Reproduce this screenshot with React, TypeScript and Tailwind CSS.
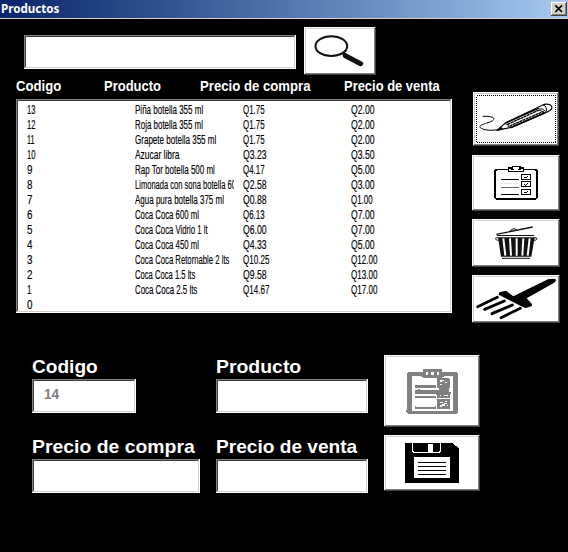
import { useLayoutEffect, useRef, useState, type ReactNode } from "react";

const raised =
  "block shrink-0 bg-white shadow-[inset_-1px_-1px_0_#404040,inset_1px_1px_0_#ffffff,inset_-2px_-2px_0_#808080,inset_2px_2px_0_#d4d0c8]";
const sunken =
  "block shrink-0 bg-white shadow-[inset_-1px_-1px_0_#ffffff,inset_1px_1px_0_#808080,inset_-2px_-2px_0_#d4d0c8,inset_2px_2px_0_#404040]";

/* Squeezes or stretches a line of text to the given width. */
function FitText({ width, className = "", children }: { width: number; className?: string; children: ReactNode }) {
  const ref = useRef<HTMLSpanElement>(null);
  const [scale, setScale] = useState(1);
  useLayoutEffect(() => {
    if (ref.current) setScale(width / ref.current.offsetWidth);
  }, [width]);
  return (
    <span
      ref={ref}
      className={`inline-block origin-left whitespace-nowrap ${className}`}
      style={{ transform: `scaleX(${scale})` }}
    >
      {children}
    </span>
  );
}

type Cell = [string, number];
const rows: Cell[][] = [
  [["13", 8.5], ["Piña botella 355 ml", 68], ["Q1.75", 21.5], ["Q2.00", 23.5]],
  [["12", 8.5], ["Roja botella 355 ml", 68], ["Q1.75", 21.5], ["Q2.00", 23.5]],
  [["11", 7.5], ["Grapete botella 355 ml", 81], ["Q1.75", 21.5], ["Q2.00", 23.5]],
  [["10", 8.5], ["Azucar libra", 44.5], ["Q3.23", 23.5], ["Q3.50", 23.5]],
  [["9", 5.5], ["Rap Tor botella 500 ml", 80], ["Q4.17", 21.5], ["Q5.00", 23.5]],
  [["8", 5.5], ["Limonada con sona botella 60", 101], ["Q2.58", 23.5], ["Q3.00", 23.5]],
  [["7", 5.5], ["Agua pura botella 375 ml", 89], ["Q0.88", 23.5], ["Q1.00", 21.5]],
  [["6", 5.5], ["Coca Coca 600 ml", 64], ["Q6.13", 21.5], ["Q7.00", 23.5]],
  [["5", 5.5], ["Coca Coca Vidrio 1 lt", 72.5], ["Q6.00", 23.5], ["Q7.00", 23.5]],
  [["4", 5.5], ["Coca Coca 450 ml", 64], ["Q4.33", 23.5], ["Q5.00", 23.5]],
  [["3", 5.5], ["Coca Coca Retornable 2 lts", 94.5], ["Q10.25", 26.5], ["Q12.00", 26.5]],
  [["2", 5.5], ["Coca Coca 1.5 lts", 60.5], ["Q9.58", 23.5], ["Q13.00", 26.5]],
  [["1", 4.5], ["Coca Coca 2.5 lts", 62.5], ["Q14.67", 26.5], ["Q17.00", 26.5]],
  [["0", 5.5]],
];

function SearchIcon() {
  return (
    <svg className="size-full" viewBox="60 81 216 144" fill="none" stroke="#111">
      <ellipse cx="142" cy="138.500" rx="47.500" ry="29.500" strokeWidth="6" />
      <path d="M174 158L190 168" strokeWidth="8" />
      <path d="M184 167L230 191" strokeWidth="15" strokeLinecap="round" />
    </svg>
  );
}

function PencilIcon() {
  return (
    <svg className="size-full" viewBox="26 24 258 162" fill="none" stroke="#000" strokeWidth="3">
      <rect x="37.500" y="34.500" width="237" height="141" strokeDasharray="3 3" shapeRendering="crispEdges" />
      <path d="M55 97C78 96 92 100 88 107C82 117 38 121 48 131C56 139 84 141 104 136" strokeWidth="3" />
      <path d="M100 138L124 116L240 61Q262 58 263 72Q260 80 242 87L141 130Z" strokeWidth="3.500" />
      <path d="M130 121L222 79M136 126L238 82" strokeWidth="4" strokeDasharray="9 1.500" />
      <path d="M127 116L222 73" strokeWidth="4" />
      <path d="M138 131L242 86" strokeWidth="5" />
      <path d="M100 139L108 129L115 135Z" fill="#000" />
      <path d="M120 119L131 121L132 128L141 130M212 75L218 79L228 79L240 87M218 72L226 75L235 75L244 83M237 64Q248 65 246 83" strokeWidth="3" />
    </svg>
  );
}

function ClipboardIcon() {
  return (
    <svg className="size-full" viewBox="24 213 264 168" fill="none" stroke="#000" shapeRendering="crispEdges">
      <rect x="93" y="257" width="126" height="88" rx="6" strokeWidth="4.500" />
      <path d="M134 252H145V248H168V252H179V262H134Z" fill="#fff" strokeWidth="4" />
      <path d="M141 257H150M161 257H170" strokeWidth="3" />
      <path d="M111 286.500H165M111 331.500H165" strokeWidth="3" />
      <path d="M111 310.500H165" stroke="#666" strokeWidth="3" />
      <path d="M111 298.500H165" stroke="#ddd" strokeWidth="3" strokeDasharray="6 3" />
      <g strokeWidth="3">
        <rect x="172.500" y="271.500" width="27" height="15" />
        <rect x="172.500" y="292.500" width="27" height="16" />
        <rect x="172.500" y="316.500" width="27" height="15" />
        <path d="M180 279L185 282L193 276M179 301L184 304L193 296M180 324L185 327L192 321" />
      </g>
    </svg>
  );
}

function TrashIcon() {
  return (
    <svg className="size-full" viewBox="24 27 264 144" fill="none" stroke="#111">
      <path d="M97 73L206 51" strokeWidth="4" />
      <path d="M139 63L143 58L153 56L156 60" strokeWidth="3" />
      <path d="M99 76.500H211" strokeWidth="3" />
      <path d="M102 82H212L202 140H111Z" fill="#111" stroke="none" />
      <path d="M104 84C92 80 91 91 104 91M210 84C222 80 222 91 210 91" strokeWidth="3" />
      <path d="M118 85L124 137M138 85L141 137M158 85V137M178 85L175 137M197 85L191 137" stroke="#fff" strokeWidth="6" />
      <path d="M114 145H198" strokeWidth="3" />
    </svg>
  );
}

function BrushIcon() {
  return (
    <svg className="size-full" viewBox="24 195 264 144" fill="#000" stroke="#000">
      <path d="M148 259L252 208Q268 204 275 208Q278 213 268 220L188 265L203 281L204 288L186 294L178 292L104 254L106 247L126 242Z" stroke="none" />
      <path d="M41 290L100 262M62 298L121 273M84 311L145 285M111 323L169 295" strokeWidth="8.500" strokeLinecap="round" />
    </svg>
  );
}

function DisabledClipboardIcon() {
  return (
    <svg className="size-full" viewBox="24 30 288 216" fill="#808080" shapeRendering="crispEdges">
      <path fillRule="evenodd" d="M98 81H240L246 87V202L240 208H98L91 200V196H93V86ZM108 92V198H232V92Z" />
      <path d="M135 80H140V73H199V80H205V93L198 98H141L135 94Z" />
      <path d="M150 81H156V89H150ZM165 81H173V89H165ZM182 81H188V89H182Z" fill="#fff" />
      <path d="M117 120H181V129H117ZM117 136H126V132H133V136H184V147H117ZM117 152H181V158H120V160H117ZM117 184H120V187H178V184H181V191H117Z" />
      <path d="M183 100H191V98H220V102H222V130H220V140H225V147H222V160H183V149H180V134H189V128H183ZM183 162H222V192H183Z" />
      <path d="M191 106H198V104H205V107H198V110H191ZM208 110H214V113H208ZM191 117H197V120H191ZM191 151H195V154H191ZM205 151H216V154H205ZM192 170H200V173H192ZM206 168H212V171H206ZM192 181H198V178H204V175H213V178H207V182H198V185H192ZM214 180H217V184H214Z" fill="#fff" />
    </svg>
  );
}

function FloppyIcon() {
  return (
    <svg className="size-full" viewBox="24 270 288 168" fill="#000" shapeRendering="crispEdges">
      <path d="M87 294H228L249 310V414H87Z" />
      <path d="M109.500 294V318L113 322.500H190L193.500 318V294" fill="none" stroke="#fff" strokeWidth="3" />
      <rect x="156" y="297" width="15" height="24" fill="#fff" />
      <rect x="114" y="336" width="108" height="63" fill="#fff" />
      <path d="M126 351.500H210M126 364.500H210M126 377.500H210M126 388.500H210" stroke="#000" strokeWidth="3" />
    </svg>
  );
}

function Field({ label, labelWidth, size, value }: { label: string; labelWidth: number; size: string; value?: string }) {
  return (
    <label className={`block ${size}`}>
      <span className="block h-6 text-[18.5px] leading-6 font-bold text-white">
        <FitText width={labelWidth}>{label}</FitText>
      </span>
      <span className={`${sunken} h-[34px] pl-3 text-[15.5px] leading-[30px] font-bold text-[#808080]`}>
        {value && <FitText width={15}>{value}</FitText>}
      </span>
    </label>
  );
}

export default function App() {
  return (
    <div className="h-[552px] w-[568px] overflow-hidden bg-black font-['Liberation_Sans',Arial,sans-serif]">
      <header className="flex h-[19px] items-start justify-between border-b border-[#d4d0c8] bg-linear-to-r from-[#0a246a] to-[#a6caf0] pl-px">
        <h1 className="font-['Noto_Sans',sans-serif] text-[12px] leading-[18px] font-bold text-white">
          <FitText width={58}>Productos</FitText>
        </h1>
        <button className="mt-0.5 mr-px h-3.5 w-4 bg-[#d4d0c8] shadow-[inset_-1px_-1px_0_#404040,inset_1px_1px_0_#ffffff,inset_-2px_-2px_0_#808080]" aria-label="Cerrar">
          <svg className="h-3.5 w-4" viewBox="0 0 16 14" stroke="#000" strokeWidth="1.700">
            <path d="M4.300 3.300L11 10M11 3.300L4.300 10" />
          </svg>
        </button>
      </header>

      <div className="flex">
        <section className="w-[472px] pt-2 pl-4">
          <div className="flex gap-2 pl-2">
            <span className={`${sunken} mt-2 h-[34px] w-[272px]`} />
            <button className={`${raised} h-12 w-[72px]`} aria-label="Buscar">
              <SearchIcon />
            </button>
          </div>
          <div className="flex h-6 text-[15.5px] leading-[22px] font-bold text-white">
            <span className="w-[88px]"><FitText width={45}>Codigo</FitText></span>
            <span className="w-24"><FitText width={57}>Producto</FitText></span>
            <span className="w-36"><FitText width={110.5}>Precio de compra</FitText></span>
            <span><FitText width={96}>Precio de venta</FitText></span>
          </div>
          <div className={`${sunken} h-[214px] w-[436px] overflow-hidden pt-1 pl-[11px] text-[12.5px] leading-[15px] text-black`}>
            {rows.map((row, i) => (
              <div key={i} className="flex h-[15px]">
                {row.map(([text, width], c) => (
                  <span key={c} className={`${c === 1 ? "mr-[9px] w-[99px]" : "w-[108px]"} shrink-0 overflow-hidden`}>
                    <FitText width={width} className="[-webkit-text-stroke:0.15px_#000]">{text}</FitText>
                  </span>
                ))}
              </div>
            ))}
          </div>
        </section>

        <aside className="flex flex-col items-start pt-[73px]">
          <button className={`${raised} mb-[9px] ml-px h-[54px] w-[86px]`} aria-label="Editar">
            <PencilIcon />
          </button>
          <button className={`${raised} mb-2 h-14 w-[88px]`} aria-label="Lista">
            <ClipboardIcon />
          </button>
          <button className={`${raised} mb-2 h-12 w-[88px]`} aria-label="Eliminar">
            <TrashIcon />
          </button>
          <button className={`${raised} h-12 w-[88px]`} aria-label="Limpiar">
            <BrushIcon />
          </button>
        </aside>
      </div>

      <form className="mt-8 flex pl-8">
        <div className="grid w-[352px] grid-cols-[184px_168px] content-start gap-y-[22px]">
          <Field label="Codigo" labelWidth={66} size="w-[104px]" value="14" />
          <Field label="Producto" labelWidth={85} size="w-[152px]" />
          <Field label="Precio de compra" labelWidth={162.5} size="w-[168px]" />
          <Field label="Precio de venta" labelWidth={141.5} size="w-[152px]" />
        </div>
        <div className="flex flex-col gap-2">
          <button type="button" disabled className={`${raised} h-[72px] w-24`} aria-label="Registrar">
            <DisabledClipboardIcon />
          </button>
          <button type="button" className={`${raised} h-14 w-24`} aria-label="Guardar">
            <FloppyIcon />
          </button>
        </div>
      </form>
    </div>
  );
}
